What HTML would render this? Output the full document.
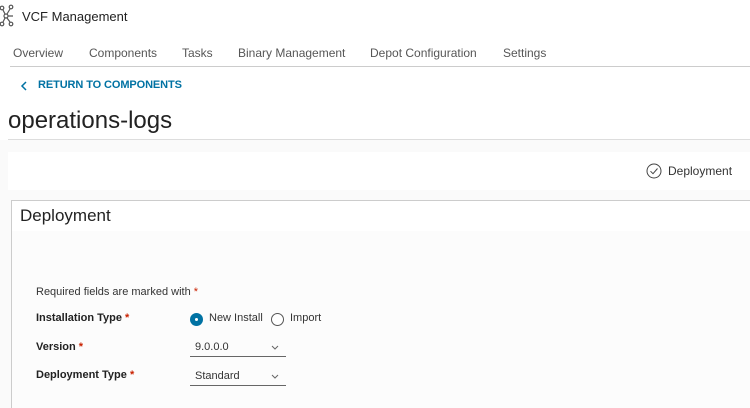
<!DOCTYPE html>
<html><head><style>
*{margin:0;padding:0;box-sizing:border-box}
body{width:750px;height:408px;overflow:hidden;background:#fff;font-family:"Liberation Sans",sans-serif;color:#333;position:relative}
.a{position:absolute;white-space:nowrap}
.nav span{position:absolute;font-size:12px;color:#565656;top:46px}
.lbl{font-size:11px;font-weight:bold;color:#222}
.star{color:#c92100}
</style></head><body>
<svg class="a" style="left:0;top:4px" width="14" height="24" viewBox="0 0 14 24" fill="none" stroke="#555" stroke-width="1.2">
<circle cx="2" cy="4" r="1.8"/><circle cx="11" cy="3" r="1.8"/><circle cx="11" cy="20" r="1.8"/><circle cx="2" cy="20" r="1.8"/><circle cx="6" cy="12" r="2"/>
<path d="M3 6L5 10M10 5L7 10M7 14L10 18M5 14L3 18M8 12H13"/></svg>
<div class="a" style="left:22px;top:9px;font-size:13px;color:#222">VCF Management</div>
<div class="nav">
<span style="left:13px">Overview</span><span style="left:89px">Components</span><span style="left:182px">Tasks</span><span style="left:238px">Binary Management</span><span style="left:370px">Depot Configuration</span><span style="left:503px">Settings</span></div>
<div class="a" style="left:10px;top:66px;width:740px;height:1px;background:#ccc"></div>
<svg class="a" style="left:20px;top:81px" width="8" height="10"><path d="M6 1L2 5L6 9" stroke="#0072a3" stroke-width="1.5" fill="none"/></svg>
<div class="a" style="left:38px;top:79px;font-size:11px;font-weight:bold;color:#0072a3;letter-spacing:-0.1px">RETURN TO COMPONENTS</div>
<div class="a" style="left:8px;top:107px;font-size:24px;color:#222">operations-logs</div>
<div class="a" style="left:8px;top:139px;width:742px;height:1px;background:#ddd"></div>
<div class="a" style="left:0;top:140px;width:750px;height:268px;background:#fafafa"></div>
<div class="a" style="left:8px;top:152px;width:742px;height:38px;background:#fff"></div>
<svg class="a" style="left:646px;top:163px" width="16" height="16"><circle cx="8" cy="8" r="7" stroke="#444" fill="none"/><path d="M4.5 8.2L7 10.7L11.5 5.5" stroke="#444" fill="none"/></svg>
<div class="a" style="left:668px;top:164px;font-size:12px;color:#333">Deployment</div>
<div class="a" style="left:11px;top:200px;width:739px;height:208px;border:1px solid #ccc;border-right:none;border-bottom:none;background:#fcfcfc"></div>
<div class="a" style="left:12px;top:201px;width:738px;height:30px;background:#fff"></div>
<div class="a" style="left:20px;top:206px;font-size:17px;color:#222">Deployment</div>
<div class="a" style="left:36px;top:286px;font-size:11px;color:#333">Required fields are marked with <span class="star">*</span></div>
<div class="a lbl" style="left:36px;top:312px">Installation Type <span class="star">*</span></div>
<div class="a lbl" style="left:36px;top:341px">Version <span class="star">*</span></div>
<div class="a lbl" style="left:36px;top:369px">Deployment Type <span class="star">*</span></div>
<div class="a" style="left:190px;top:313px;width:13px;height:13px;border-radius:50%;background:#0072a3"></div>
<div class="a" style="left:195px;top:318px;width:3px;height:3px;border-radius:50%;background:#fff"></div>
<div class="a" style="left:209px;top:312px;font-size:11px;color:#333">New Install</div>
<div class="a" style="left:271px;top:313px;width:13px;height:13px;border-radius:50%;border:1px solid #555;background:#fff"></div>
<div class="a" style="left:290px;top:312px;font-size:11px;color:#333">Import</div>
<div class="a" style="left:195px;top:341px;font-size:11px;color:#333">9.0.0.0</div>
<svg class="a" style="left:271px;top:345px" width="8" height="6"><path d="M1 1L4 4L7 1" stroke="#666" fill="none"/></svg>
<div class="a" style="left:190px;top:356px;width:96px;height:1px;background:#666"></div>
<div class="a" style="left:195px;top:370px;font-size:11px;color:#333">Standard</div>
<svg class="a" style="left:271px;top:374px" width="8" height="6"><path d="M1 1L4 4L7 1" stroke="#666" fill="none"/></svg>
<div class="a" style="left:190px;top:385px;width:96px;height:1px;background:#666"></div>
</body></html>
